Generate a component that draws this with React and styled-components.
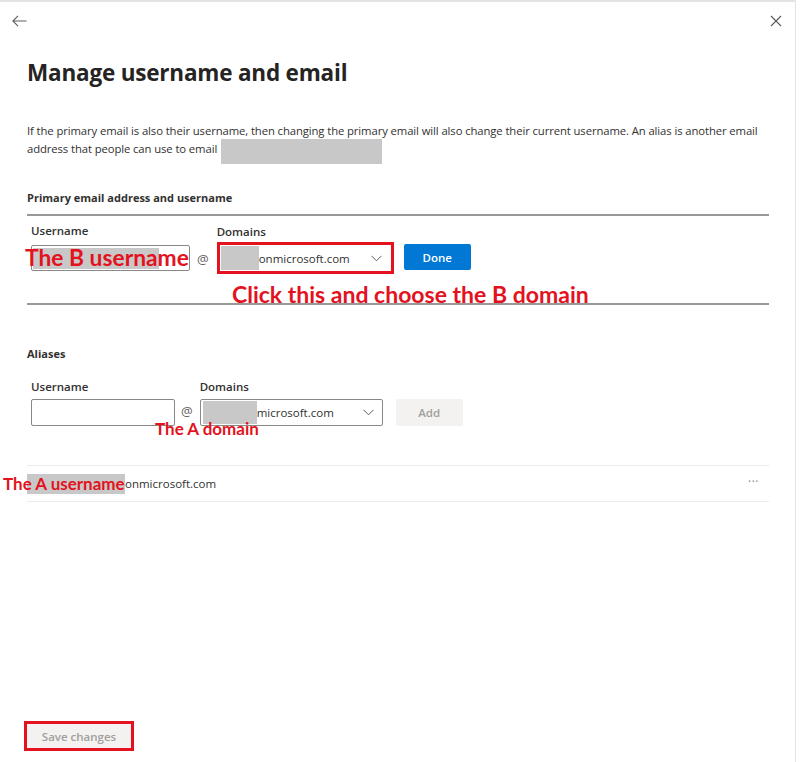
import React from "react";
import styled, { createGlobalStyle } from "styled-components";

const Global = createGlobalStyle`
  html, body { margin: 0; padding: 0; background: #ffffff; }
  body { font-family: "Open Sans", "Noto Sans", Arial, sans-serif; color: #323130; }
  * { box-sizing: border-box; }
`;

const Panel = styled.div`
  width: 796px;
  height: 762px;
  border-top: 2px solid #e3e3e3;
  border-right: 1px solid #e3e3e3;
  display: flex;
  flex-direction: column;
  background: #fff;
`;

const TopBar = styled.div`
  display: flex;
  justify-content: space-between;
  align-items: center;
  padding: 6px 10px 0 10px;
  height: 32px;
`;

const IconButton = styled.button`
  width: 18px;
  height: 18px;
  padding: 0;
  border: 0;
  background: transparent;
  display: flex;
  align-items: center;
  justify-content: center;
  color: #605e5c;
  cursor: pointer;
`;

const Content = styled.div`
  padding: 0 0 0 27px;
  width: 769px;
  display: flex;
  flex-direction: column;
`;

const Title = styled.h1`
  margin: 24px 0 0 0;
  font-size: 22.5px;
  font-weight: 700;
  line-height: 30px;
  color: #252423;
  letter-spacing: -0.2px;
`;

const Intro = styled.p`
  margin: 35px 0 0 0;
  font-size: 11.3px;
  line-height: 16px;
  color: #323130;
  letter-spacing: -0.1px;
`;

const Redact = styled.span`
  display: inline-block;
  flex: none;
  width: ${(p) => p.$w}px;
  height: ${(p) => p.$h}px;
  background: #c8c8c8;
  vertical-align: ${(p) => p.$valign || "middle"};
  margin-left: ${(p) => p.$ml || 0}px;
`;

const SectionTitle = styled.h2`
  margin: ${(p) => p.$mt}px 0 0 0;
  font-size: 11px;
  font-weight: 700;
  line-height: 16px;
  color: #323130;
`;

const Divider = styled.div`
  height: ${(p) => (p.$strong ? 2 : 1)}px;
  background: ${(p) => (p.$strong ? "#9a9896" : "#edebe9")};
  margin-top: ${(p) => p.$mt || 0}px;
`;

const FieldRow = styled.div`
  position: relative;
  display: flex;
  align-items: flex-end;
  margin-top: ${(p) => p.$mt}px;
  padding-left: 4px;
`;

const Field = styled.div`
  position: relative;
  display: flex;
  flex-direction: column;
`;

const Label = styled.label`
  font-size: 11.5px;
  font-weight: 600;
  line-height: 16px;
  color: #323130;
  margin-bottom: ${(p) => p.$mb || 5}px;
`;

const TextInput = styled.div`
  width: ${(p) => p.$w}px;
  height: ${(p) => p.$h}px;
  border: 1px solid #8a8886;
  border-radius: 2px;
  background: #fff;
  display: flex;
  align-items: center;
  padding: 0;
  margin-bottom: ${(p) => p.$mb || 0}px;
`;

const At = styled.span`
  font-size: 13px;
  color: #605e5c;
  line-height: 16px;
  margin: 0 ${(p) => p.$mr}px ${(p) => p.$mb}px ${(p) => p.$ml}px;
`;

const RedFrame = styled.div`
  border: 3px solid #e3121e;
  padding: 1px;
`;

const Select = styled.div`
  width: ${(p) => p.$w}px;
  height: ${(p) => p.$h}px;
  border: ${(p) => (p.$plain ? "0" : "1px solid #8a8886")};
  border-radius: 2px;
  display: flex;
  align-items: center;
  padding: 0 8px 0 ${(p) => (p.$plain ? 0 : 2)}px;
  font-size: 11.5px;
  color: #323130;
  background: #fff;
`;

const SelectText = styled.span`
  flex: 1;
  display: flex;
  align-items: center;
  white-space: nowrap;
`;

const Chevron = () => (
  <svg width="11" height="7" viewBox="0 0 11 7" fill="none">
    <path d="M0.5 0.8 L5.5 5.8 L10.5 0.8" stroke="#605e5c" strokeWidth="1" />
  </svg>
);

const Button = styled.button`
  width: ${(p) => (p.$w ? `${p.$w}px` : "auto")};
  height: ${(p) => p.$h || 26}px;
  border: 0;
  border-radius: 2px;
  font-family: inherit;
  font-size: 11.5px;
  font-weight: 600;
  background: ${(p) => (p.$primary ? "#0078d4" : "#f3f2f1")};
  color: ${(p) => (p.$primary ? "#ffffff" : "#a19f9d")};
  margin-left: ${(p) => p.$ml || 0}px;
  margin-bottom: ${(p) => p.$mb || 0}px;
  padding: 0;
  white-space: nowrap;
`;

/* red annotations written over the form */
const Note = styled.span`
  position: absolute;
  left: ${(p) => p.$x}px;
  top: ${(p) => p.$y}px;
  font-family: "Lato", "Open Sans", sans-serif;
  font-weight: 700;
  font-size: ${(p) => p.$size}px;
  line-height: 1;
  color: #e3121e;
  white-space: nowrap;
  z-index: 2;
`;

const Callout = styled.div`
  font-family: "Lato", "Open Sans", sans-serif;
  font-weight: 700;
  font-size: 23px;
  line-height: 22px;
  color: #e3121e;
  padding-left: 205px;
  margin-top: 9px;
  height: 20px;
  position: relative;
  z-index: 1;
  white-space: nowrap;
`;

const ListRow = styled.div`
  position: relative;
  display: flex;
  align-items: center;
  justify-content: space-between;
  height: 37px;
  border-top: 1px solid #edebe9;
  border-bottom: 1px solid #edebe9;
  margin-top: ${(p) => p.$mt}px;
  font-size: 11.5px;
  color: #323130;
`;

const Address = styled.span`
  display: flex;
  align-items: center;
`;

const More = styled.span`
  color: #8a8886;
  font-size: 12px;
  letter-spacing: 0.5px;
  margin-right: 10px;
  line-height: 1;
  padding-bottom: 4px;
`;

const Footer = styled.div`
  margin-top: auto;
  padding: 0 0 11px 24px;
`;

const SaveFrame = styled.div`
  display: inline-flex;
  border: 3px solid #e3121e;
`;

export default function App() {
  return (
    <>
      <Global />
      <Panel>
        <TopBar>
          <IconButton aria-label="Back">
            <svg width="15" height="12" viewBox="0 0 15 12" fill="none">
              <path d="M6 0.8 L0.9 6 L6 11.2 M0.9 6 H14.5" stroke="#605e5c" strokeWidth="1.1" />
            </svg>
          </IconButton>
          <IconButton aria-label="Close">
            <svg width="12" height="12" viewBox="0 0 12 12" fill="none">
              <path d="M1 1 L11 11 M11 1 L1 11" stroke="#605e5c" strokeWidth="1.2" />
            </svg>
          </IconButton>
        </TopBar>

        <Content>
          <Title>Manage username and email</Title>
          <Intro>
            If the primary email is also their username, then changing the primary email will also
            change their current username. An alias is another email address that people can use to
            email <Redact $w={161} $h={25} $valign="-11px" $ml={1} />
          </Intro>

          <SectionTitle $mt={26}>Primary email address and username</SectionTitle>
          <Divider $strong $mt={8} />

          <FieldRow $mt={7}>
            <Field>
              <Label $mb={6}>Username</Label>
              <TextInput $w={159} $h={26} $mb={3}>
                <Redact $w={126} $h={21} $ml={1} />
              </TextInput>
              <Note $x={-6} $y={23} $size={22.8}>The B username</Note>
            </Field>
            <At $ml={7} $mr={8} $mb={7}>@</At>
            <Field>
              <Label $mb={2}>Domains</Label>
              <RedFrame>
                <Select $w={169} $h={24} $plain>
                  <SelectText>
                    <Redact $w={38} $h={24} />
                    onmicrosoft.com
                  </SelectText>
                  <Chevron />
                </Select>
              </RedFrame>
            </Field>
            <Button $primary $w={67} $ml={10} $mb={4}>Done</Button>
          </FieldRow>
          <Callout>Click this and choose the B domain</Callout>
          <Divider $strong $mt={0} />

          <SectionTitle $mt={41}>Aliases</SectionTitle>

          <FieldRow $mt={17}>
            <Field>
              <Label $mb={4}>Username</Label>
              <TextInput $w={144} $h={27} />
            </Field>
            <At $ml={6} $mr={7} $mb={7}>@</At>
            <Field>
              <Label $mb={4}>Domains</Label>
              <Select $w={183} $h={27}>
                <SelectText>
                  <Redact $w={54} $h={23} />
                  microsoft.com
                </SelectText>
                <Chevron />
              </Select>
            </Field>
            <Button $w={67} $ml={13} $h={27} $mb={0}>Add</Button>
            <Note $x={128} $y={41} $size={17}>The A domain</Note>
          </FieldRow>

          <ListRow $mt={39}>
            <Address>
              <Redact $w={98} $h={20} $ml={0} />
              onmicrosoft.com
            </Address>
            <More>···</More>
            <Note $x={-24} $y={9} $size={17}>The A username</Note>
          </ListRow>
        </Content>

        <Footer>
          <SaveFrame>
            <Button $w={104} $h={24}>Save changes</Button>
          </SaveFrame>
        </Footer>
      </Panel>
    </>
  );
}
